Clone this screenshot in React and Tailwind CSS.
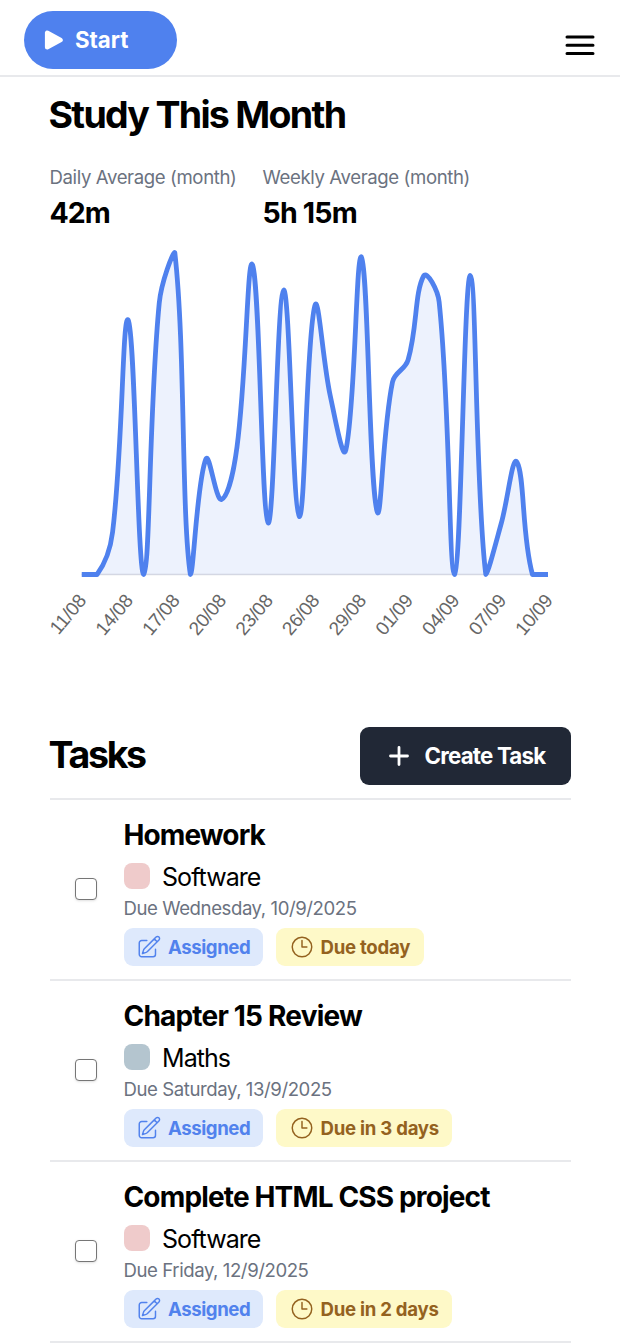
import React from 'react';

const LEFT = 81.5;
const STEP = 15.55;
const TOP = 251.5;
const BASE = 574.5;
const TENSION = 0.4;
const VALUES = [
  574.5, 574.5, 532, 320, 574.5, 303, 252.5, 574.5, 459, 499.5, 447, 265, 523, 290, 516.5, 306,
  396, 450, 257, 511, 382, 360, 276, 302, 574.5, 275.5, 574.5, 523, 462, 574.5, 574.5,
];
const LABELS = ['11/08', '14/08', '17/08', '20/08', '23/08', '26/08', '29/08', '01/09', '04/09', '07/09', '10/09'];

const clamp = (y) => Math.min(BASE, Math.max(TOP, y));

// Smooth curve with control points weighted by neighbour distance and kept inside the plot area.
function smoothPath(ys) {
  const pts = ys.map((y, i) => ({ x: LEFT + i * STEP, y }));
  const ctrl = pts.map((p, i) => {
    const a = pts[Math.max(0, i - 1)];
    const b = pts[Math.min(pts.length - 1, i + 1)];
    const d0 = Math.hypot(p.x - a.x, p.y - a.y);
    const d1 = Math.hypot(b.x - p.x, b.y - p.y);
    const fa = (TENSION * d0) / (d0 + d1);
    const fb = (TENSION * d1) / (d0 + d1);
    return {
      px: p.x - fa * (b.x - a.x),
      py: clamp(p.y - fa * (b.y - a.y)),
      nx: p.x + fb * (b.x - a.x),
      ny: clamp(p.y + fb * (b.y - a.y)),
    };
  });
  let d = `M${pts[0].x} ${pts[0].y}`;
  for (let i = 1; i < pts.length; i++) {
    d += `C${ctrl[i - 1].nx} ${ctrl[i - 1].ny} ${ctrl[i].px} ${ctrl[i].py} ${pts[i].x} ${pts[i].y}`;
  }
  return d;
}

function StudyChart() {
  const line = smoothPath(VALUES);
  const right = LEFT + STEP * (VALUES.length - 1);
  return (
    <svg className="block h-[420px] w-full" viewBox="0 240 620 420">
      <defs>
        <clipPath id="plot-area">
          <rect x={LEFT} y="249.5" width={right - LEFT} height="327.5" />
        </clipPath>
      </defs>
      <path d={`M${LEFT} 574.5H${right}`} stroke="#dcdde3" strokeWidth="1.5" />
      <g clipPath="url(#plot-area)">
        <path d={`${line}L${right} ${BASE}L${LEFT} ${BASE}Z`} fill="#4f81ee" fillOpacity="0.1" />
        <path d={line} fill="none" stroke="#4f81ee" strokeWidth="4.8" strokeLinejoin="round" />
      </g>
      {LABELS.map((label, i) => (
        <text
          key={label}
          transform={`translate(${LEFT + i * STEP * 3 - 3.5} 593.5) rotate(-50)`}
          x="0"
          y="12"
          textAnchor="end"
          className="fill-[#666666] font-['Liberation_Sans',Arial,sans-serif] text-[19px] tracking-[-0.3px]"
        >
          {label}
        </text>
      ))}
    </svg>
  );
}

function PencilIcon() {
  return (
    <svg className="size-[26px]" viewBox="0 0 24 24" fill="none" stroke="currentColor" strokeWidth="1.35" strokeLinecap="round" strokeLinejoin="round">
      <path d="m16.862 4.487 1.687-1.688a1.875 1.875 0 1 1 2.652 2.652L10.582 16.07a4.5 4.5 0 0 1-1.897 1.13L6 18l.8-2.685a4.5 4.5 0 0 1 1.13-1.897l8.932-8.931Zm0 0L19.5 7.125M18 14v4.75A2.25 2.25 0 0 1 15.75 21H5.25A2.25 2.25 0 0 1 3 18.75V8.25A2.25 2.25 0 0 1 5.25 6H10" />
    </svg>
  );
}

function ClockIcon() {
  return (
    <svg className="size-[26px]" viewBox="0 0 24 24" fill="none" stroke="currentColor" strokeWidth="1.35" strokeLinecap="round" strokeLinejoin="round">
      <path d="M12 6v6h4.5m4.5 0a9 9 0 1 1-18 0 9 9 0 0 1 18 0Z" />
    </svg>
  );
}

function Stat({ label, value, width, valueTracking }) {
  return (
    <div className={width}>
      <div className="h-7 text-[18.6px] leading-7 tracking-[-0.39px] text-[#6b7280]">{label}</div>
      <div className={`mt-[2px] h-[42px] text-[28.5px] leading-10 font-[650] ${valueTracking}`}>{value}</div>
    </div>
  );
}

function Task({ title, subject, color, due, status, titleTracking, statusWidth }) {
  return (
    <li className="flex h-[181px] border-b-2 border-[#e8e9ec]">
      <div className="flex w-[74px] items-center pb-[2px] pl-[25px]">
        <input type="checkbox" className="size-[22px] appearance-none rounded-[4px] border-[1.5px] border-[#767676] bg-white shadow-sm" />
      </div>
      <div className="flex flex-col pt-[15px]">
        <h3 className={`h-10 text-[28px] leading-10 font-[650] ${titleTracking}`}>{title}</h3>
        <div className="mt-[4px] flex h-9 items-center gap-[12.5px]">
          <span className={`-mt-0.5 size-[26px] rounded-[8px] ${color}`} />
          <span className="text-[25px] leading-9 tracking-[-0.95px]">{subject}</span>
        </div>
        <div className="-mt-px mb-px h-7 text-[18.6px] leading-[29px] tracking-[-0.43px] text-[#6b7280]">{due}</div>
        <div className="mt-[5px] flex gap-[13px] text-[18.6px] font-[650]">
          <span className="flex h-[38px] w-[139.5px] items-center gap-[6px] rounded-[9px] bg-[#dee9fc] pl-[12.5px] tracking-[-0.42px] text-[#5182ed]">
            <PencilIcon />
            <span className="pt-px">Assigned</span>
          </span>
          <span className={`flex h-[38px] items-center gap-[6px] rounded-[9px] bg-[#fef9c8] pl-[12.5px] tracking-[-0.25px] text-[#94621f] ${statusWidth}`}>
            <ClockIcon />
            <span className="pt-px">{status}</span>
          </span>
        </div>
      </div>
    </li>
  );
}

const TASKS = [
  { title: 'Homework', subject: 'Software', color: 'bg-[#efcbcb]', due: 'Due Wednesday, 10/9/2025', status: 'Due today', titleTracking: 'tracking-[-0.9px]', statusWidth: 'w-[147.5px]' },
  { title: 'Chapter 15 Review', subject: 'Maths', color: 'bg-[#b4c5cf]', due: 'Due Saturday, 13/9/2025', status: 'Due in 3 days', titleTracking: 'tracking-[-0.8px]', statusWidth: 'w-[175.5px]' },
  { title: 'Complete HTML CSS project', subject: 'Software', color: 'bg-[#efcbcb]', due: 'Due Friday, 12/9/2025', status: 'Due in 2 days', titleTracking: 'tracking-[-0.85px]', statusWidth: 'w-[175.5px]' },
];

export default function App() {
  return (
    <div className="h-[1344px] w-[620px] overflow-hidden bg-white font-[Inter,sans-serif] whitespace-nowrap text-black">
      <header className="flex h-[77px] items-start justify-between border-b-2 border-[#e8e9ec] pr-[25px] pl-[23.5px]">
        <button className="mt-[10.5px] flex h-[58px] w-[153.5px] items-center rounded-full bg-[#4f81ee] pl-[20.5px] text-white">
          <svg className="h-[20px] w-[20px]" viewBox="0 0 20 20">
            <path d="M3.2 2.8V17.2L16.5 10Z" fill="currentColor" stroke="currentColor" strokeWidth="4.6" strokeLinejoin="round" />
          </svg>
          <span className="ml-[11px] text-[22.3px] font-bold">Start</span>
        </button>
        <svg className="mt-[34px] h-[22px] w-[30px]" viewBox="0 0 30 22" stroke="black" strokeWidth="3" strokeLinecap="round">
          <path d="M2 2.9H28M2 11.3H28M2 19.6H28" />
        </svg>
      </header>

      <main>
        <section>
          <div className="px-[49.5px] pt-[12px]">
            <h2 className="-ml-px h-[52px] text-[37.5px] leading-[52px] font-[650] tracking-[-1.7px]">Study This Month</h2>
            <div className="mt-[22px] flex">
              <Stat label="Daily Average (month)" value="42m" width="w-[213px]" valueTracking="tracking-[-1px]" />
              <Stat label="Weekly Average (month)" value="5h 15m" width="w-[220px]" valueTracking="tracking-[-0.8px]" />
            </div>
          </div>
          <div className="mt-[5px]">
            <StudyChart />
          </div>
        </section>

        <section className="px-[49.5px] pt-[67px]">
          <div className="flex items-center justify-between border-b-2 border-[#e8e9ec] pb-[13px]">
            <h2 className="-mt-[3px] -ml-px text-[37.5px] leading-[52px] font-[650] tracking-[-2.3px]">Tasks</h2>
            <button className="flex h-[58px] w-[210.5px] items-center rounded-[9px] bg-[#212836] pl-[28.5px] text-white">
              <svg className="size-[20px]" viewBox="0 0 20 20" stroke="currentColor" strokeWidth="2.8" strokeLinecap="round">
                <path d="M10 1.5V18.5M1.5 10H18.5" />
              </svg>
              <span className="ml-[16px] text-[22.3px] font-[650] tracking-[-0.8px]">Create Task</span>
            </button>
          </div>
          <ul>
            {TASKS.map((task) => (
              <Task key={task.title} {...task} />
            ))}
          </ul>
        </section>
      </main>
    </div>
  );
}
